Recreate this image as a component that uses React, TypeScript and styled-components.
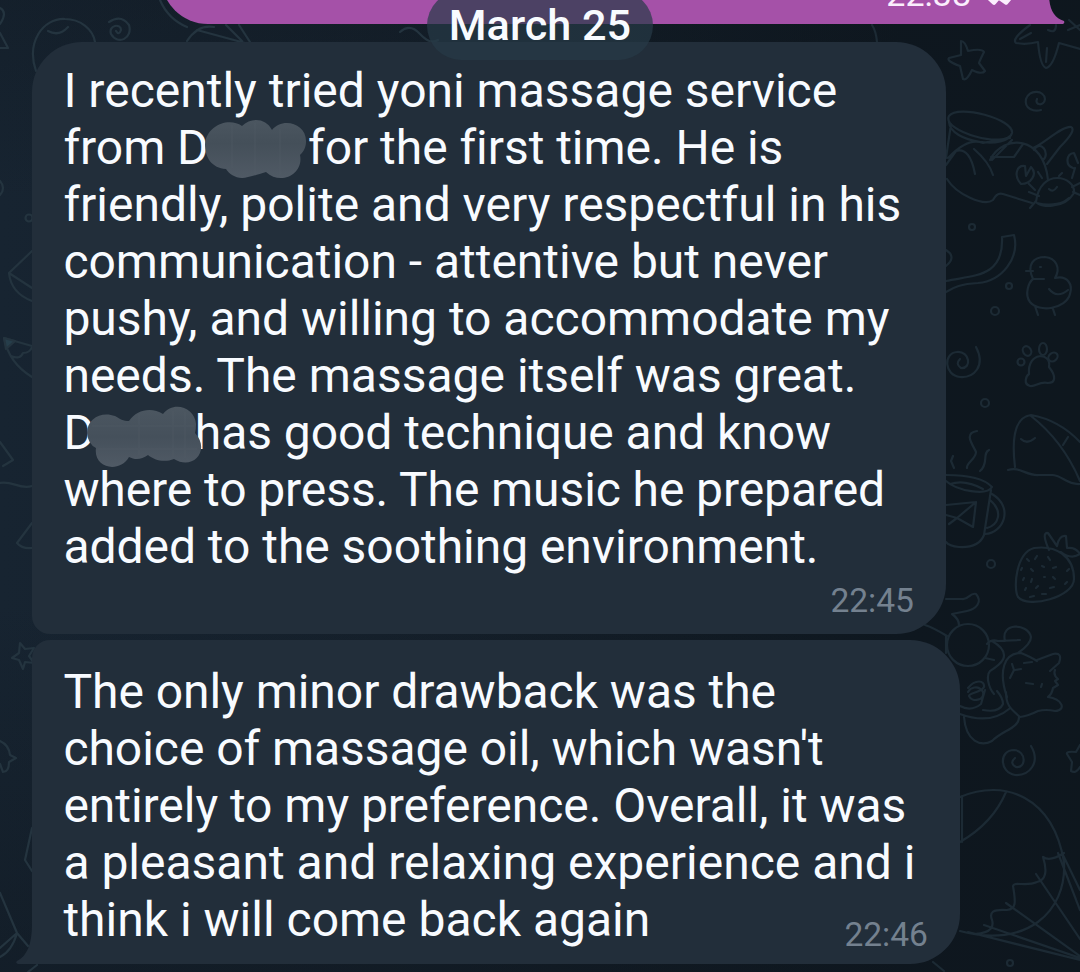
import React from 'react';
import styled, { createGlobalStyle } from 'styled-components';

const GlobalStyle = createGlobalStyle`
  body {
    margin: 0;
    background: #0e171f;
  }
`;

const Screen = styled.main`
  position: relative;
  width: 1080px;
  height: 972px;
  overflow: hidden;
  display: flex;
  flex-direction: column;
  align-items: flex-start;
  font-family: Roboto, 'Liberation Sans', sans-serif;
  color: #f8fbff;
  background:
    linear-gradient(180deg, rgba(14, 22, 30, 0.3) 0, transparent 200px, transparent 600px, rgba(14, 22, 30, 0.45) 100%),
    linear-gradient(90deg, #172431 0, #15202b 380px, #0e171f 900px, #0e171e 100%);
`;

const Wallpaper = styled.svg`
  position: absolute;
  inset: 0;
  width: 1080px;
  height: 972px;
  fill: none;
  stroke-width: 2.2;
  stroke-linecap: round;
  stroke-linejoin: round;
`;

const OutgoingBubble = styled.div`
  position: relative;
  box-sizing: border-box;
  flex: none;
  align-self: flex-end;
  display: flex;
  justify-content: flex-end;
  align-items: flex-end;
  gap: 15px;
  width: 888px;
  height: 100px;
  margin: -76px 31px 18px 0;
  padding: 0 34px 11px 0;
  border-radius: 47px 47px 0 47px;
  background: #a551a8;
`;

const Status = styled.span`
  font-size: 34px;
  line-height: 40px;
  margin-bottom: -1px;
  color: #fbeefd;
`;

const Ticks = styled.svg`
  width: 29px;
  height: 22px;
  margin-bottom: 7px;
  overflow: visible;
  fill: none;
  stroke: #fbeefd;
  stroke-width: 4.5;
  stroke-linecap: round;
  stroke-linejoin: round;
`;

const OutgoingTail = styled.svg`
  position: absolute;
  right: -16px;
  bottom: 0;
  width: 16px;
  height: 30px;
  fill: #a551a8;
`;

const DatePill = styled.div`
  position: absolute;
  z-index: 2;
  top: -9px;
  left: 427px;
  width: 226px;
  height: 69px;
  border-radius: 35px;
  background: rgba(39, 58, 71, 0.7);
  font-size: 43.2px;
  font-weight: 500;
  line-height: 69px;
  text-align: center;
  white-space: nowrap;
`;

const Bubble = styled.article<{ $width: number; $height: number; $radius: string; $top: number }>`
  position: relative;
  box-sizing: border-box;
  flex: none;
  width: ${(p) => p.$width}px;
  height: ${(p) => p.$height}px;
  margin: 0 0 6px 32px;
  padding: ${(p) => p.$top}px 32px 0 31.4px;
  border-radius: ${(p) => p.$radius};
  background: #222e3a;
  display: flex;
  flex-direction: column;
`;

const Line = styled.div<{ $spacing?: number }>`
  height: 57px;
  line-height: 57px;
  font-size: 48px;
  letter-spacing: ${(p) => p.$spacing ?? 0}px;
  white-space: pre;
`;

const Time = styled.time<{ $lift?: number }>`
  align-self: flex-end;
  margin-top: ${(p) => p.$lift ?? 0}px;
  font-size: 33.6px;
  line-height: 40px;
  color: #74818f;
`;

const IncomingTail = styled.svg`
  position: absolute;
  left: -16px;
  bottom: 0;
  width: 18px;
  height: 40px;
  fill: #222e3a;
`;

const Redacted = styled.span<{ $width: number }>`
  position: relative;
  display: inline-block;
  width: ${(p) => p.$width}px;
  height: 40px;
  vertical-align: middle;
`;

const Smudge = styled.svg<{ $left: number; $top: number }>`
  position: absolute;
  left: ${(p) => p.$left}px;
  top: ${(p) => p.$top}px;
`;

const Doodles = () => (
  <Wallpaper viewBox="0 0 1080 972" aria-hidden="true">
    <g stroke="#24343f">
      <path d="M36 71C26 42 43 18 65 19C80 19 93 29 95 42M48 31Q59 37 68 27M0 8Q8 12 0 24M0 33L8 48H0M109 22Q121 14 129 25C133 38 118 46 111 34C108 25 121 23 121 30Q119 36 116 31" />
      <path d="M160 0Q168 19 187 27M187 41Q198 24 214 27M197 30L245 43M226 25L242 41M239 25L250 42M400 32Q410 23 420 34T438 40" />
      <path d="M0 181Q6 188 0 195M32 251L9 273Q11 293 32 301M9 273L32 288M32 346L4 338Q9 363 32 377M11 356Q20 360 23 353Q30 353 32 347M0 442L13 460L3 466M0 483C12 480 19 490 32 486M32 523L17 543Q22 549 32 548" />
      <path d="M4 338L15 341L6 349Z" fill="#263e4b" />
      <circle cx="29" cy="218" r="3.5" />
      <path d="M20 643L25 649L34 648L29 656L34 663L25 662L23 669L19 660L12 658L19 653ZM0 741Q9 745 10 755L16 758L9 762Q9 772 3 772L0 764M32 828L25 860L32 871M0 893L17 933L0 948M17 933L28 946M0 957Q12 951 17 933M28 972L37 965" />
    </g>
    <g stroke="#1c2a34">
      <path d="M872 25Q876 31 877 42M947 636Q934 628 925 625" />
      <path d="M961 41Q965 41 968 51Q982 48 984 52Q980 60 979 63L985 71Q982 75 972 70Q967 81 963 79L960 66Q946 61 949 58L961 55Z" />
      <path d="M1030 25Q1011 39 1016 43Q1026 45 1038 42Q1040 66 1046 68Q1053 67 1059 43L1080 49M1048 30Q1056 34 1056 25M1068 30L1080 25M1046 62L1047 48M1020 39L1031 33M1069 20L1080 30" />
      <path d="M1041 110C1034 112 1024 109 1026 99C1030 89 1044 90 1045 99C1044 107 1034 105 1037 99" />
      <path d="M949 116C958 104 1014 119 1012 133C1007 150 941 131 949 116ZM949 122C950 143 1008 150 1012 133M951 124L946 158M1012 140L992 160M948 158Q968 137 983 143L1010 138M956 151Q970 147 975 174M974 149Q989 162 993 175M990 160C1004 133 1044 136 1048 180M991 157L1014 157L1023 144M1033 148C1043 145 1061 126 1071 127Q1077 130 1060 147L1047 164M1034 150C1040 139 1051 153 1043 160M947 179C956 194 984 207 993 200Q997 192 1003 194L1032 203M946 165L956 151" />
      <path d="M1036 202C1040 167 1076 176 1074 193C1064 210 1039 207 1036 202ZM1049 189Q1053 193 1057 187M1021 184C1013 175 1017 165 1025 166L1026 176L1031 167C1038 174 1031 184 1021 184M1073 168C1065 165 1066 154 1074 153L1078 163M1075 168L1072 178M1029 184L1035 190M1072 187L1080 183M1073 192L1080 195M1039 196L1029 192M1036 201L1030 208M1042 178L1038 172M1059 176L1062 173M1037 203C1052 207 1064 203 1069 198" />
      <circle cx="972" cy="227" r="3" /><circle cx="1009" cy="286" r="3" /><circle cx="995" cy="311" r="4" /><circle cx="985" cy="403" r="4" /><circle cx="991" cy="564" r="4" /><circle cx="1010" cy="963" r="3" />
      <path d="M946 250Q957 257 946 266M946 281C973 275 1004 278 1002 237L1014 235C1020 258 1002 281 978 283C961 284 954 287 946 292" />
      <path d="M1033 279C1026 264 1034 257 1045 257C1056 258 1061 268 1055 278C1068 275 1073 285 1070 294C1066 309 1039 313 1030 302C1024 294 1029 282 1033 279H1044M1033 271H1026M1049 289Q1057 299 1068 290M1035 306L1038 315M1053 309L1055 315M1040 267L1041 267" />
      <path d="M976 347C986 366 974 378 960 377C944 375 943 353 957 352C970 351 972 369 961 368Q955 364 960 359" />
      <path d="M1029 374C1027 351 1052 352 1049 367C1057 377 1055 383 1048 383C1039 381 1036 387 1030 386C1023 384 1026 376 1029 374Z" />
      <ellipse cx="1027" cy="351" rx="4" ry="5" transform="rotate(-30 1027 351)" /><ellipse cx="1043" cy="349" rx="4" ry="6" /><ellipse cx="1053" cy="357" rx="4" ry="5" transform="rotate(50 1053 357)" /><circle cx="1021" cy="362" r="3.5" />
      <path d="M1015 467Q1009 418 1031 415Q1059 420 1080 442M1031 416Q1063 441 1080 481M1021 439Q1027 445 1035 438M1068 437L1063 445M1008 470C1020 466 1026 476 1039 475H1053C1063 476 1067 485 1080 484" />
      <path d="M977 431C963 433 973 445 976 452C976 459 966 463 967 468M989 450C982 453 989 464 980 471M953 456L951 461L954 468M946 475Q981 475 992 487C987 496 957 491 946 481M950 484Q965 479 983 489M991 490L984 535Q979 548 959 547Q949 546 946 542M992 494C1014 507 1004 533 985 534M990 500C1004 512 998 525 987 528M946 505L976 502L973 527L957 518L976 502M946 515L957 518L949 524" />
      <path d="M1034 548C1016 553 1013 588 1018 597C1028 609 1074 597 1074 579C1074 556 1056 545 1034 548ZM1049 550Q1041 532 1048 533L1057 546Q1059 535 1066 536L1067 548Q1076 547 1080 554Q1071 560 1061 552" />
      <path d="M1027 559L1029 561M1037 556L1035 559M1048 557L1050 560M1022 568L1021 570M1031 569L1033 571M1042 566L1044 567M1056 567L1053 568M1067 571L1069 569M1024 578L1023 580M1032 579L1031 582M1044 577L1045 577M1055 579L1053 577M1065 584L1067 582M1026 588L1025 590M1038 586L1036 588M1050 588L1054 587M1030 597L1034 596M1042 594L1046 594" />
      <path d="M946 599H962C969 600 970 592 976 594C983 602 976 609 967 611L952 614Q959 619 959 625" />
      <circle cx="968" cy="645" r="21" />
      <path d="M946 636L946 653M987 644Q991 639 998 641L1020 640M992 641C1016 655 998 666 990 671C986 675 988 687 994 694M1005 641C1000 622 1028 623 1031 637Q1031 644 1018 653M1007 697C998 671 1004 653 1021 653Q1031 657 1037 661M1037 660L1053 654Q1063 652 1059 663L1050 671M1055 670Q1053 675 1058 679L1055 681L1058 685L1053 688Q1052 694 1048 697C1062 699 1067 710 1055 711Q1046 709 1038 711Q1028 716 1020 717C1011 709 1006 706 1006 692M1024 663L1032 662M1012 664L1014 670L1010 678M1015 670L1021 669M1026 683L1033 684M1042 684L1041 687M960 706Q971 712 981 704L985 690M968 688C975 679 985 680 984 687C981 693 970 692 969 696C972 703 985 700 983 692C978 684 970 688 968 692M983 710Q999 713 1003 704Q1003 698 997 691M960 714Q990 725 1009 709M964 717C966 742 981 747 992 741C1003 730 1020 728 1019 716M985 658L994 660" />
      <path d="M1031 746C1041 763 1029 776 1015 775C999 772 999 750 1014 750C1027 751 1026 769 1016 767Q1009 763 1015 758" />
      <path d="M1080 745L1076 752Q1066 751 1067 754L1072 762L1071 771Q1076 774 1080 767" />
      <path d="M960 797C1005 778 1053 797 1064 862C1067 912 1026 949 960 931M960 842Q993 823 1006 792M962 796V842M1064 853Q1050 862 1043 857Q1050 879 1037 882C1026 887 1014 881 1013 886C1016 903 1016 909 1007 910C993 909 989 912 992 920C996 933 977 935 970 933M1058 853L1080 910M1062 853L1080 890M1036 874L1080 939M1006 903L1080 956M984 925L1080 958M968 932L1080 960M933 962L944 971" />
    </g>
  </Wallpaper>
);

const FirstSmudge = () => (
  <Smudge $left={-4} $top={-11} width="104" height="62" viewBox="0 0 104 62" aria-hidden="true">
    <defs>
      <linearGradient id="smudgeA" x2="0" y2="1">
        <stop stopColor="#4b5660" /><stop offset=".4" stopColor="#444f59" /><stop offset="1" stopColor="#505a65" />
      </linearGradient>
    </defs>
    <path fill="url(#smudgeA)" d="M0 24C2 5 24-3 37 6C46-3 61-2 67 10C77-3 101 3 101 21C101 27 99 31 95 35C99 54 76 66 61 52C54 54 49 56 43 57C33 60 25 55 21 49C7 48 0 38 0 24Z" />
    <path stroke="#56616b" strokeOpacity=".2" strokeWidth="2" d="M27 5V48M50 3V54M75 9V55" />
  </Smudge>
);

const SecondSmudge = () => (
  <Smudge $left={-8} $top={-10} width="116" height="63" viewBox="0 0 116 63" aria-hidden="true">
    <defs>
      <linearGradient id="smudgeB" x2="0" y2="1">
        <stop stopColor="#4c5761" /><stop offset=".5" stopColor="#45505b" /><stop offset="1" stopColor="#505a65" />
      </linearGradient>
    </defs>
    <path fill="url(#smudgeB)" d="M0 27C0 12 15 5 28 10C33 13 36 15 42 15C50 3 65 1 76 8C87-6 108 2 109 18Q109 23 108 27C124 44 106 65 87 53C77 57 67 54 61 49C54 54 48 54 42 51C32 68 6 62 9 42Q1 38 0 27Z" />
    <path stroke="#56616b" strokeOpacity=".2" strokeWidth="2" d="M5 20H107M11 43H110M52 8V49M86 5V51M98 6V52" />
  </Smudge>
);

export default function App() {
  return (
    <Screen>
      <GlobalStyle />
      <Doodles />
      <OutgoingBubble>
        <Status>22:38</Status>
        <Ticks viewBox="0 0 29 22"><path d="M2 13L8 18.5L22 2M15 15L20 18.5L34 2" /></Ticks>
        <OutgoingTail viewBox="0 0 16 30"><path d="M0 0C0 15 5 24 15 27Q16 29 14 30H0Z" /></OutgoingTail>
      </OutgoingBubble>
      <DatePill>March 25</DatePill>
      <Bubble $width={914} $height={592} $radius="50px 50px 50px 18px" $top={20}>
        <Line>I recently tried yoni massage service</Line>
        <Line $spacing={-0.04}>from D<Redacted $width={99.5}><FirstSmudge /></Redacted>for the first time. He is</Line>
        <Line>friendly, polite and very respectful in his</Line>
        <Line $spacing={-0.02}>communication - attentive but never</Line>
        <Line $spacing={-0.02}>pushy, and willing to accommodate my</Line>
        <Line>needs. The massage itself was great.</Line>
        <Line $spacing={-0.06}>D<Redacted $width={100}><SecondSmudge /></Redacted>has good technique and know</Line>
        <Line $spacing={-0.09}>where to press. The music he prepared</Line>
        <Line $spacing={-0.04}>added to the soothing environment.</Line>
        <Time $lift={6}>22:45</Time>
      </Bubble>
      <Bubble $width={928} $height={324} $radius="18px 50px 50px 0" $top={23}>
        <Line $spacing={-0.04}>The only minor drawback was the</Line>
        <Line $spacing={-0.05}>choice of massage oil, which wasn't</Line>
        <Line $spacing={-0.04}>entirely to my preference. Overall, it was</Line>
        <Line>a pleasant and relaxing experience and i</Line>
        <Line>think i will come back again</Line>
        <Time $lift={-33}>22:46</Time>
        <IncomingTail viewBox="0 0 18 40"><path d="M16 0C16 20 11 32 1 37Q-1 39 2 40H18V0Z" /></IncomingTail>
      </Bubble>
    </Screen>
  );
}
